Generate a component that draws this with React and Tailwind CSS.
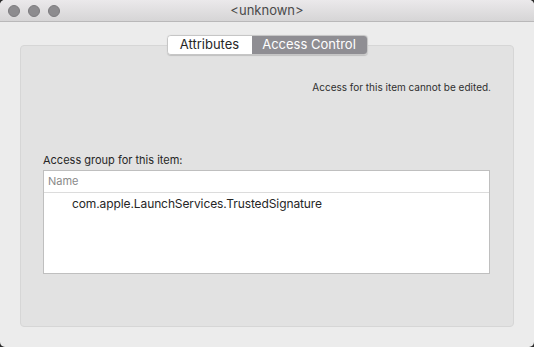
import React from "react";

const font = { fontFamily: "Inter, 'Liberation Sans', sans-serif" };

function Lights(){
  return (
    <div className="flex items-center gap-[8px] pl-[8px]">
      {[0,1,2].map(i=>(
        <span key={i} className="w-[12px] h-[12px] rounded-full bg-[#8d8c8f] border border-[#7c7b7e]"/>
      ))}
    </div>
  );
}

export default function App(){
  return (
    <div style={font} className="w-[534px] h-[347px] bg-[#2b2b2b]">
      <div className="w-full h-full bg-[#ececec] rounded-[5px] overflow-hidden flex flex-col">
        <div className="relative h-[22px] shrink-0 flex items-center bg-gradient-to-b from-[#ebe9eb] to-[#d6d5d6] border-b border-[#b9b8b9]">
          <Lights/>
          <div className="absolute inset-0 flex items-center justify-center text-[13px] text-[#4a4a4a]">&lt;unknown&gt;</div>
        </div>

        <div className="flex flex-col px-[20px] pt-[13px]">
          <div className="relative z-10 self-center flex h-[20px] rounded-[4px] border border-[#c6c6c6] overflow-hidden text-[13px] shadow-[0_0.5px_1px_rgba(0,0,0,0.15)]">
            <div className="w-[84px] bg-white text-[#262626] flex items-center justify-center">Attributes</div>
            <div className="w-[115px] bg-[#8f8e93] text-white flex items-center justify-center">Access Control</div>
          </div>

          <div className="-mt-[10px] h-[282px] rounded-[4px] border border-[#d6d6d6] bg-[#e2e2e2] flex flex-col">
            <div className="pt-[34px] pr-[22px] text-right text-[10px] text-[#2f2f2f]">
              Access for this item cannot be edited.
            </div>
            <div className="mt-[57px] pl-[22px] text-[11px] text-[#262626]">Access group for this item:</div>
            <div className="mt-[1px] ml-[22px] mr-[23px] h-[104px] bg-white border border-[#bfbfbf] flex flex-col">
              <div className="h-[22px] border-b border-[#dcdcdc] flex items-center pl-[4px] text-[11px] text-[#8a8a8a]">Name</div>
              <div className="h-[22px] flex items-center pl-[28px] text-[12px] tracking-[-0.1px] text-[#262626]">com.apple.LaunchServices.TrustedSignature</div>
            </div>
          </div>
        </div>
      </div>
    </div>
  );
}
